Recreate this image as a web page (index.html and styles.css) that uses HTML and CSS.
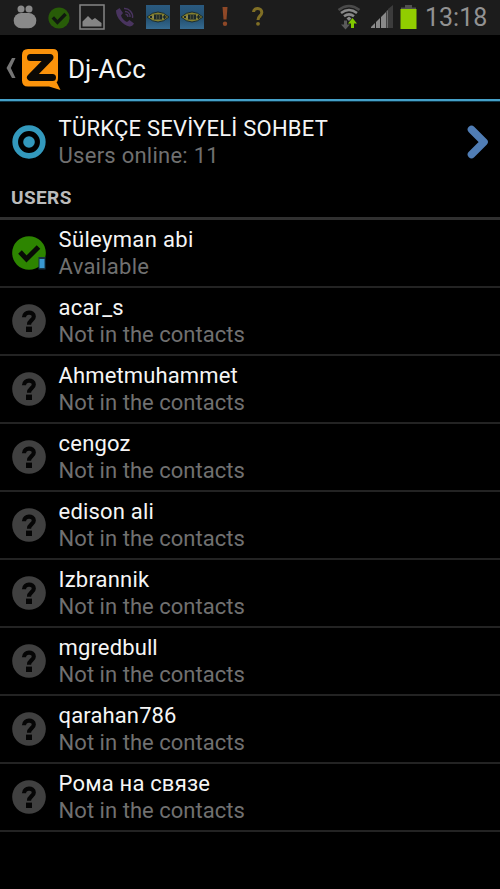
FILE: index.html
```html
<!DOCTYPE html>
<html lang="en">
<head>
<meta charset="utf-8">
<title>Dj-ACc</title>
<link rel="stylesheet" href="styles.css">
</head>
<body>
<svg class="defs" width="0" height="0" aria-hidden="true">
  <symbol id="unknown" viewBox="0 0 34 34">
    <circle cx="17" cy="17" r="16.8" fill="#404040"/>
    <path d="M12 13.200C12 7.300 21.800 7.300 21.800 12.400C21.800 16.200 17 16 17 20.800" fill="none" stroke="#050505" stroke-width="4.200"/>
    <rect x="14" y="22.600" width="6" height="5.400" fill="#050505"/>
  </symbol>
  <symbol id="eye" viewBox="0 0 24 24">
    <linearGradient id="sky" x2="0" y2="1"><stop offset="0" stop-color="#2a5a80"/><stop offset=".55" stop-color="#245070"/><stop offset="1" stop-color="#356b91"/></linearGradient>
    <rect width="24" height="24" fill="url(#sky)"/>
    <path d="M1 12Q12 2 23 12Q12 22 1 12Z" fill="#85802d" stroke="#172b34"/>
    <path d="M5 12Q12 6.500 19 12Q12 17.500 5 12Z" fill="#8f8a55"/>
    <path d="M8 9.500h8v5H8zM4 11h2v2H4z" fill="#1b2828"/>
    <path d="M10.700 10v4M13.300 10v4" stroke="#6b6c48" stroke-width=".7"/>
    <path d="M16.500 12h4M18.500 10v4" stroke="#1b2828" stroke-width="1.300"/>
  </symbol>
</svg>
<header class="status">
  <div class="notifications">
    <svg width="24" height="26" viewBox="0 0 24 26"><g fill="#898989"><circle cx="8" cy="5" r="3.5"/><circle cx="16" cy="5" r="3.5"/><rect x=".7" y="9" width="22.6" height="15.3" rx="7.5"/></g></svg>
    <svg class="check" width="22" height="26" viewBox="0 0 22 26"><circle cx="11" cy="14" r="10.6" fill="#285c08"/><path d="M4.800 13.400l4.600 5L17.600 10" fill="none" stroke="#10180f" stroke-width="3.400"/></svg>
    <svg width="26" height="26" viewBox="0 0 26 26"><rect x="1" y="1" width="24" height="24" fill="none" stroke="#858585" stroke-width="1.500"/><path d="M3.500 22.500v-5L9 12l4 4 3-2 6.500 5v3.500z" fill="#858585"/></svg>
    <svg width="20" height="22" viewBox="0 0 20 22"><path d="M1 4.500L4.500 2 8 7 6 9.500C7 12.500 9.500 15 12 16L14.500 14 19 17.500C18 19.500 16.500 20.500 14.500 20.500C8 19 1 12 1 4.500Z" fill="#49345f"/><path d="M9 2.500C14 2 18.500 7 17.500 12M10 5.500C13 5.500 15.500 8 15 11M10.500 8.300C12 8.500 13 9.500 12.800 11" fill="none" stroke="#49345f" stroke-width="1.400"/></svg>
    <svg width="24" height="24"><use href="#eye"/></svg>
    <svg width="24" height="24"><use href="#eye"/></svg>
    <svg width="8" height="20" viewBox="0 0 8 20"><path d="M1.500 0h5L5.500 12.500h-3z" fill="#8f4827"/><circle cx="4" cy="16.800" r="2.200" fill="#8f4827"/></svg>
    <svg width="12" height="20" viewBox="0 0 12 20"><path d="M1.500 5C1.800 .2 10 .5 9.800 5.500C9.600 9 6 9 6 13" fill="none" stroke="#806f25" stroke-width="3"/><circle cx="6" cy="16.800" r="1.900" fill="#806f25"/></svg>
  </div>
  <div class="system">
    <svg width="24" height="26" viewBox="0 0 24 26"><g fill="none" stroke="#898989" stroke-width="2.500"><path d="M1.500 6Q12 -2 22.500 6" stroke="#4a4a4a"/><path d="M4 9Q12 3 20 9"/><path d="M7 12.300Q12 8.500 17 12.300"/></g><path d="M9.500 14.500L12 12.500l2.500 2L12 17z" fill="#898989"/><path d="M7 16.500v4H4l4.500 5 4.500-5h-3v-4z" fill="#5a5a5a"/><path d="M14 24v-4.500h-3l4.500-5.500 4.500 5.500h-3V24z" fill="#81c800"/></svg>
    <svg class="signal" width="24" height="24" viewBox="0 0 24 24"><path d="M1 22v1h4v-5zM6 17v6h4V13zM11 12v11h5V7z" fill="#898989"/><path d="M16.500 6v17h1.500V5z" fill="#6c6c6c"/><path d="M18 4l5-4v23h-5z" fill="#3c3c3c"/></svg>
    <svg class="battery" width="17" height="24" viewBox="0 0 17 24"><path d="M5 0h7v2.500h4V4H1V2.500h4z" fill="#505050"/><rect x=".5" y="4" width="16" height="20" fill="#91cd00"/></svg>
    <span class="clock">13:18</span>
  </div>
</header>
<nav class="appbar">
  <svg class="back" width="10" height="20" viewBox="0 0 10 20"><path d="M6 0h3.500L4.800 10l4.700 10H6L.5 10z" fill="#757575"/></svg>
  <svg class="logo" width="39" height="41" viewBox="0 0 39 41"><path d="M6 0h25q5 0 5 5v23q0 5 -1.500 5L38.500 41 27 37.500H6q-6 0 -6-6V6q0-6 6-6z" fill="#fb930b"/><path d="M8.500 8.500H28L8.500 28.500h22" fill="none" stroke="#0b0905" stroke-width="7" stroke-linecap="round" stroke-linejoin="round"/></svg>
  <h1 class="title">Dj-ACc</h1>
</nav>
<main>
  <section class="room">
    <svg class="icon" width="34" height="34" viewBox="0 0 34 34"><circle cx="17" cy="17" r="13.800" fill="none" stroke="#3399bd" stroke-width="5.700"/><circle cx="17" cy="17" r="5.800" fill="#3399bd"/></svg>
    <div class="info"><div class="name room-name">TÜRKÇE SEVİYELİ SOHBET</div><div class="state online">Users online: 11</div></div>
    <svg class="chevron" width="22" height="34" viewBox="0 0 22 34"><path d="M4.500 4.500L17 17 4.500 29.500" fill="none" stroke="#507db5" stroke-width="7.600" stroke-linecap="round" stroke-linejoin="round"/></svg>
  </section>
  <h2 class="heading">USERS</h2>
  <ul class="users">
    <li class="user"><svg class="icon" width="34" height="34" viewBox="0 0 34 34"><circle cx="17" cy="17" r="16.800" fill="#2d8500"/><path d="M8 16l6.500 7L26.500 11" fill="none" stroke="#080c06" stroke-width="5"/><rect x="26.500" y="21" width="7" height="12.500" fill="#173546"/><rect x="27.500" y="23" width="5" height="9" fill="#3998d0"/></svg><div class="info"><div class="name wide">Süleyman abi</div><div class="state available">Available</div></div></li>
    <li class="user"><svg class="icon" width="34" height="34"><use href="#unknown"/></svg><div class="info"><div class="name">acar_s</div><div class="state">Not in the contacts</div></div></li>
    <li class="user"><svg class="icon" width="34" height="34"><use href="#unknown"/></svg><div class="info"><div class="name tight">Ahmetmuhammet</div><div class="state">Not in the contacts</div></div></li>
    <li class="user"><svg class="icon" width="34" height="34"><use href="#unknown"/></svg><div class="info"><div class="name">cengoz</div><div class="state">Not in the contacts</div></div></li>
    <li class="user"><svg class="icon" width="34" height="34"><use href="#unknown"/></svg><div class="info"><div class="name">edison ali</div><div class="state">Not in the contacts</div></div></li>
    <li class="user"><svg class="icon" width="34" height="34"><use href="#unknown"/></svg><div class="info"><div class="name">Izbrannik</div><div class="state">Not in the contacts</div></div></li>
    <li class="user"><svg class="icon" width="34" height="34"><use href="#unknown"/></svg><div class="info"><div class="name tight">mgredbull</div><div class="state">Not in the contacts</div></div></li>
    <li class="user"><svg class="icon" width="34" height="34"><use href="#unknown"/></svg><div class="info"><div class="name tight">qarahan786</div><div class="state">Not in the contacts</div></div></li>
    <li class="user"><svg class="icon" width="34" height="34"><use href="#unknown"/></svg><div class="info"><div class="name">Рома на связе</div><div class="state">Not in the contacts</div></div></li>
  </ul>
</main>
</body>
</html>
```
FILE: styles.css
```css
* { box-sizing: border-box; }
body { margin: 0; background: #000; color: #f5f5f5; font-family: Roboto, "Liberation Sans", sans-serif; height: 889px; overflow: hidden; }
svg { display: block; flex: none; }
.defs { height: 0; }
.status { height: 35px; background: #1c1c1c; display: flex; justify-content: space-between; }
.notifications { display: flex; align-items: center; padding: 0 0 1px 13px; gap: 10px; }
.notifications .check { margin: 0 1px 0 1px; }
.notifications svg:nth-child(3) { margin-left: -2px; }
.notifications svg:nth-child(5) { margin-left: 1px; }
.notifications svg:nth-child(7) { margin-left: 7px; }
.notifications svg:nth-child(8) { margin-left: 13px; }
.system { display: flex; align-items: center; padding: 0 13px 1px 0; }
.signal { margin-left: 9px; }
.battery { margin-left: 6px; }
.clock { width: 62px; margin: 2px 0 0 8px; color: #929292; font-size: 25px; line-height: 34px; white-space: nowrap; }
.appbar { height: 66px; border-bottom: 2px solid #45a0c8; box-shadow: 0 1px #0d3547; display: flex; align-items: center; padding: 0 0 0 6px; }
.back { margin-top: 2px; }
.logo { margin: 4px 0 0 6px; }
.title { margin: 4px 0 0 7px; font-size: 26px; line-height: 32px; font-weight: 400; }
.room { height: 79px; padding: 2px 11px 0 12px; display: flex; align-items: center; }
.info { margin-left: 12.6px; width: 380px; flex: none; }
.icon { margin-top: -1px; }
.room .icon, .room .chevron { margin-top: 1px; }
.name, .state { font-size: 22px; line-height: 26px; white-space: nowrap; }
.info .state { line-height: 27px; margin-bottom: -1px; }
.name { letter-spacing: .18px; }
.room-name { letter-spacing: .23px; }
.wide { letter-spacing: .33px; }
.tight { letter-spacing: .12px; }
.state { color: #707070; letter-spacing: .03px; }
.online, .available { letter-spacing: .25px; }
.chevron { margin-left: auto; }
.heading { margin: 0; height: 40px; padding: 6px 0 0 11px; border-bottom: 3px solid #303030; color: #bbb; font-size: 19px; line-height: 24px; font-weight: 700; letter-spacing: .4px; }
.users { list-style: none; margin: 0; padding: 0; }
.user { height: 68px; padding: 0 12px; border-bottom: 2px solid #232323; display: flex; align-items: center; }
```
